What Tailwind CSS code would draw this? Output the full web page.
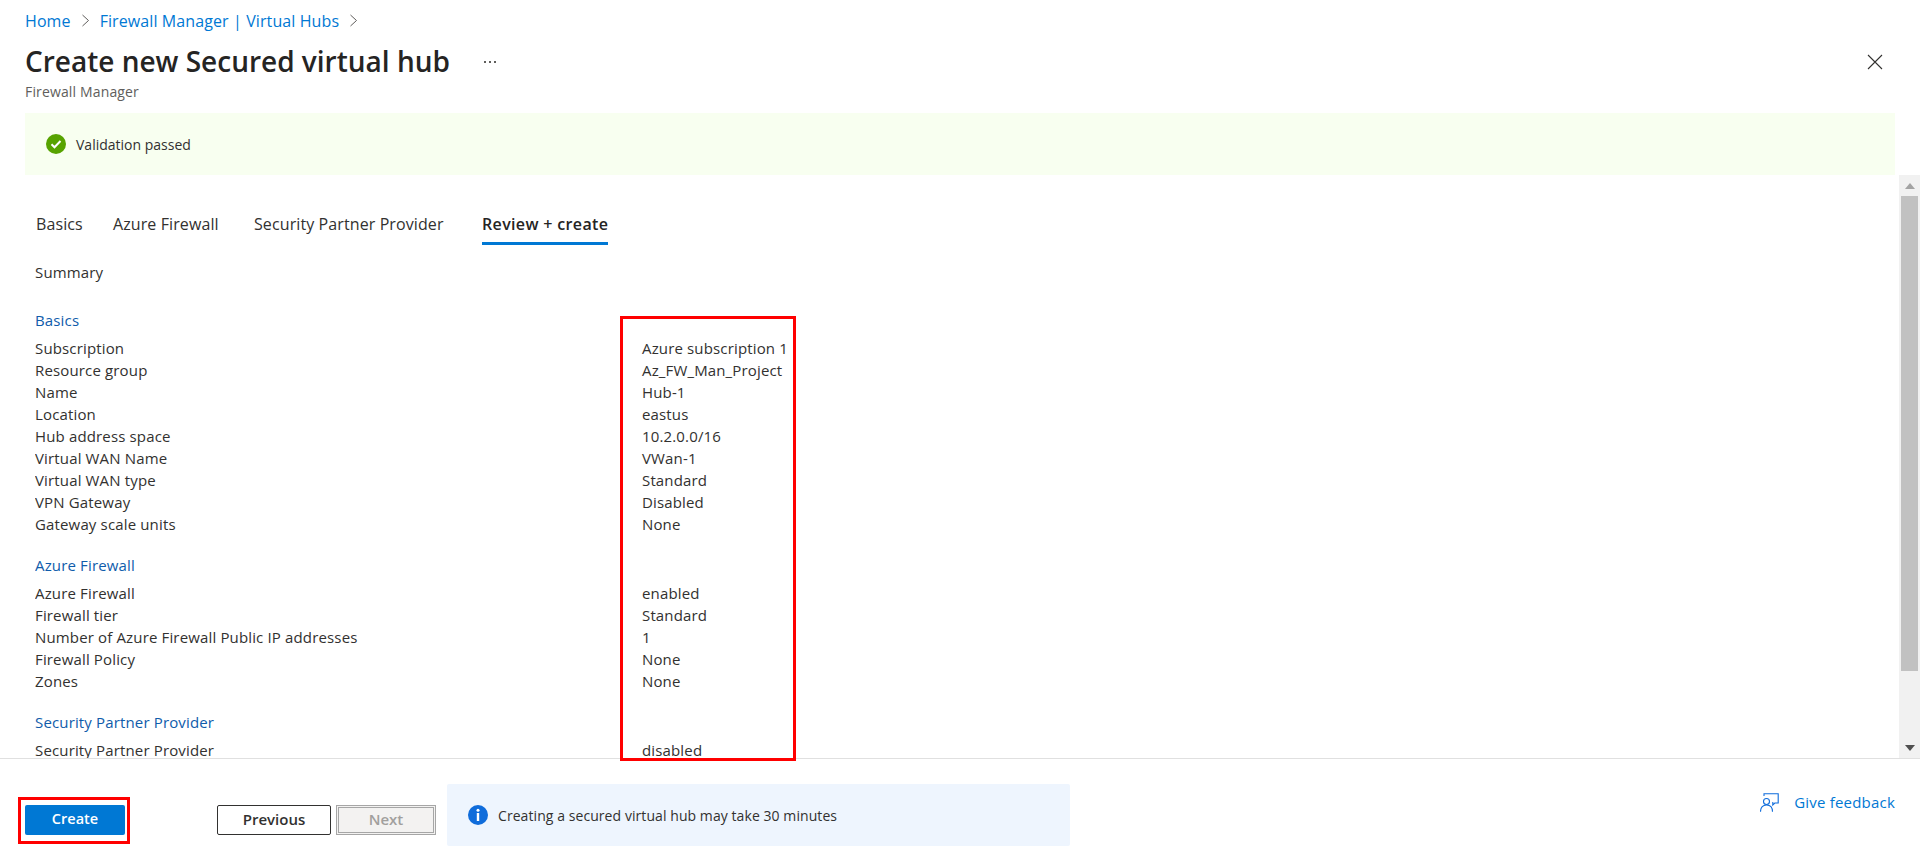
<!DOCTYPE html>
<html lang="en">
<head>
    <meta charset="UTF-8">
    <meta name="viewport" content="width=device-width, initial-scale=1.0">
    <title>Create new Secured virtual hub</title>
    <script src="https://cdn.jsdelivr.net/npm/@tailwindcss/browser@4"></script>
</head>
<body class="bg-white font-['Open_Sans',sans-serif] text-[#323130]">
    <div class="relative flex flex-col w-[1920px] h-[857px] overflow-hidden">
        <!-- Header -->
        <div class="px-[25px]">
            <div class="flex items-center h-[42px] pb-[1px] text-[16px] tracking-[0.1px] text-[#0078d4]">
                <span>Home</span>
                <svg class="w-[9px] h-[13px] mx-[10px]" viewBox="0 0 9 13" fill="none" stroke="#605e5c" stroke-width="1"><path d="M1.5 1l6 5.5-6 5.5"/></svg>
                <span>Firewall Manager | Virtual Hubs</span>
                <svg class="w-[9px] h-[13px] ml-[10px]" viewBox="0 0 9 13" fill="none" stroke="#605e5c" stroke-width="1"><path d="M1.5 1l6 5.5-6 5.5"/></svg>
            </div>
            <div class="flex items-center h-[40px]">
                <h1 class="mb-[2px] text-[28px] font-semibold text-[#252423]">Create new Secured virtual hub</h1>
                <span class="flex gap-[3px] ml-[34px]">
                    <i class="w-[2px] h-[2px] bg-[#605e5c]"></i><i class="w-[2px] h-[2px] bg-[#605e5c]"></i><i class="w-[2px] h-[2px] bg-[#605e5c]"></i>
                </span>
                <svg class="w-[16px] h-[16px] ml-auto mr-[12px]" viewBox="0 0 16 16" fill="none" stroke="#323130" stroke-width="1.1"><path d="M1 1l14 14M15 1L1 15"/></svg>
            </div>
            <div class="h-[20px] leading-[20px] text-[14px] text-[#605e5c] tracking-[0.15px]">Firewall Manager</div>
            <!-- Validation banner -->
            <div class="flex items-center h-[62px] mt-[11px] pl-[21px] bg-[#f8fff0]">
                <svg class="w-[20px] h-[20px]" viewBox="0 0 20 20"><circle cx="10" cy="10" r="10" fill="#57a300"/><path d="M5.5 10.3l3 3 6-6.3" fill="none" stroke="#fff" stroke-width="2"/></svg>
                <span class="ml-[10px] text-[14px]">Validation passed</span>
            </div>
        </div>

        <!-- Scrollable content -->
        <div class="flex flex-1 min-h-0 pl-[35px]">
            <div class="flex-1 min-w-0 overflow-hidden">
                <div class="flex mt-[30px] ml-[1px] h-[40px] text-[16px] tracking-[0.1px]">
                    <div class="w-[77px] pt-[7px]">Basics</div>
                    <div class="w-[141px] pt-[7px]">Azure Firewall</div>
                    <div class="w-[228px] pt-[7px]">Security Partner Provider</div>
                    <div class="w-[126px] h-[40px] pt-[7px] font-semibold border-b-[3px] border-[#0078d4] text-[#252423] tracking-[0.35px] whitespace-nowrap">Review + create</div>
                </div>
                <div class="mt-[16px] h-[22px] leading-[22px] text-[15px] tracking-[0.15px]">Summary</div>

                <div class="mt-[26px] text-[15px] leading-[22px] tracking-[0.15px]">
                    <h2 class="mb-[6px] text-[#0f5cab]">Basics</h2>
                    <div class="grid grid-cols-[607px_1fr]">
                        <span>Subscription</span><span>Azure subscription 1</span>
                        <span>Resource group</span><span>Az_FW_Man_Project</span>
                        <span>Name</span><span>Hub-1</span>
                        <span>Location</span><span>eastus</span>
                        <span>Hub address space</span><span>10.2.0.0/16</span>
                        <span>Virtual WAN Name</span><span>VWan-1</span>
                        <span>Virtual WAN type</span><span>Standard</span>
                        <span>VPN Gateway</span><span>Disabled</span>
                        <span>Gateway scale units</span><span>None</span>
                    </div>

                    <h2 class="mt-[19px] mb-[6px] text-[#0f5cab]">Azure Firewall</h2>
                    <div class="grid grid-cols-[607px_1fr]">
                        <span>Azure Firewall</span><span>enabled</span>
                        <span>Firewall tier</span><span>Standard</span>
                        <span>Number of Azure Firewall Public IP addresses</span><span>1</span>
                        <span>Firewall Policy</span><span>None</span>
                        <span>Zones</span><span>None</span>
                    </div>

                    <h2 class="mt-[19px] mb-[6px] text-[#0f5cab]">Security Partner Provider</h2>
                    <div class="grid grid-cols-[607px_1fr]">
                        <span>Security Partner Provider</span><span>disabled</span>
                    </div>
                </div>
            </div>
            <!-- Scrollbar -->
            <div class="flex flex-col items-center w-[21px] bg-[#f1f1f1]">
                <div class="flex items-center justify-center h-[21px] w-full">
                    <svg class="w-[10px] h-[6px]" viewBox="0 0 10 6"><path d="M5 0l5 6H0z" fill="#a3a3a3"/></svg>
                </div>
                <div class="w-[17px] h-[475px] bg-[#c1c1c1]"></div>
                <div class="flex items-center justify-center mt-auto h-[21px] w-full">
                    <svg class="w-[10px] h-[6px]" viewBox="0 0 10 6"><path d="M0 0h10L5 6z" fill="#505050"/></svg>
                </div>
            </div>
        </div>

        <!-- Footer -->
        <div class="flex items-start h-[99px] border-t border-[#e0e0e0]">
            <div class="mt-[38px] ml-[18px] w-[112px] h-[47px] pt-[5px] pl-[4px] border-[3px] border-[#ff0000]">
                <button class="w-[100px] h-[30px] pb-[2px] rounded-[2px] bg-[#0078d4] text-white text-[14.5px] font-semibold">Create</button>
            </div>
            <button class="mt-[46px] ml-[87px] w-[114px] h-[30px] pb-[2px] rounded-[2px] border border-[#323130] text-[15px] font-semibold">Previous</button>
            <button class="mt-[46px] ml-[5px] w-[100px] h-[30px] pb-[2px] border-[3px] border-double border-[#a6a6a6] bg-[#f3f2f1] text-[#a19f9d] text-[15px] font-semibold">Next</button>
            <div class="flex items-center mt-[25px] ml-[11px] w-[623px] h-[62px] pl-[21px] rounded-[2px] bg-[#eef5fe]">
                <svg class="w-[20px] h-[20px]" viewBox="0 0 20 20"><circle cx="10" cy="10" r="10" fill="#0f6cdb"/><circle cx="10" cy="5.2" r="1.5" fill="#fff"/><rect x="8.8" y="8" width="2.4" height="8" fill="#fff"/></svg>
                <span class="ml-[10px] text-[14px] tracking-[0.07px]">Creating a secured virtual hub may take 30 minutes</span>
            </div>
            <div class="flex items-center mt-[32px] ml-auto mr-[25px] text-[15px] text-[#0078d4] tracking-[0.2px]">
                <svg class="w-[19px] h-[19px] mr-[15px]" viewBox="0 0 19 19" fill="none" stroke="#0f6cdb" stroke-width="1.1">
                    <path d="M4 3V.8h14.2V10h-3.4l-2 2V9"/>
                    <circle cx="6.5" cy="8.5" r="3"/>
                    <path d="M.5 18.8C.5 14.3 3 12 6.5 12s6 2.3 6 6.8"/>
                </svg>
                <span>Give feedback</span>
            </div>
        </div>

        <!-- Red annotation round the values -->
        <div class="absolute left-[620px] top-[316px] w-[176px] h-[445px] border-[3px] border-[#ff0000]"></div>
    </div>
</body>
</html>
